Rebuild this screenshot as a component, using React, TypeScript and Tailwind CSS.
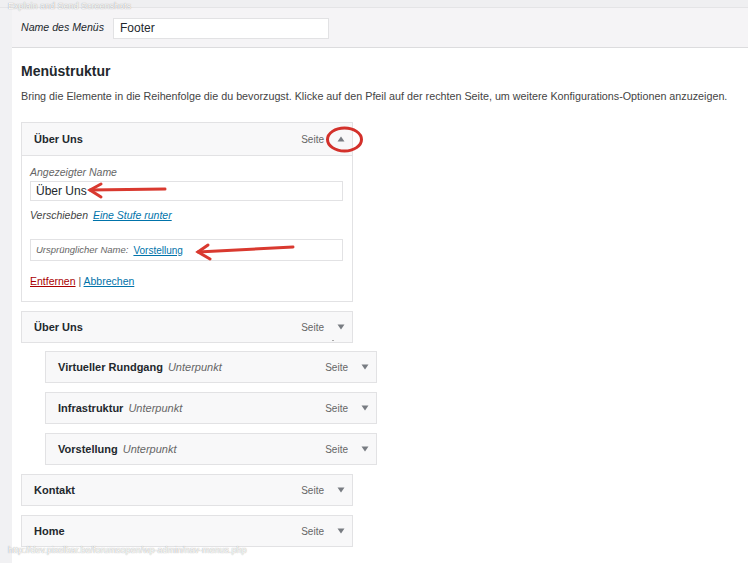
import React from "react";

const Arrow = ({ up = false }: { up?: boolean }) => (
  <svg width="8" height="6" viewBox="0 0 8 6" className="block">
    {up ? <path d="M4 0.5 L7.5 5.5 L0.5 5.5 Z" fill="#787c82" /> : <path d="M0.5 0.5 L7.5 0.5 L4 5.5 Z" fill="#787c82" />}
  </svg>
);

const ItemBar = ({ title, sub, up = false, h = "h-[30px]" }: { title: string; sub?: string; up?: boolean; h?: string }) => (
  <div className={`${h} flex items-center bg-[#f8f8f9] pl-[12px] pr-[7px]`}>
    <span className="font-bold text-[11px] text-[#23282d]">{title}</span>
    {sub && <span className="italic text-[11px] text-[#666] ml-[5px]">{sub}</span>}
    <span className="ml-auto text-[10px] text-[#666]">Seite</span>
    <span className="ml-[13px] w-[8px] flex justify-center">
      <Arrow up={up} />
    </span>
  </div>
);

const Item = ({ title, sub, indent = false, mt = "mt-[9px]" }: { title: string; sub?: string; indent?: boolean; mt?: string }) => (
  <div className={`w-[332px] border border-[#e2e2e4] ${indent ? "ml-[24px]" : ""} ${mt}`}>
    <ItemBar title={title} sub={sub} />
  </div>
);

export default function App() {
  return (
    <div className="relative w-[748px] h-[563px] overflow-hidden bg-[#f1f1f3] font-['Liberation_Sans',Arial,sans-serif] flex flex-col">
      <div className="h-[8px] shrink-0 border-b border-[#e4e4e6] bg-[#efeff1]" />
      <div className="flex-1 ml-[12px] flex flex-col bg-white">
        <div className="h-[40px] shrink-0 flex items-center bg-[#f5f4f6] border-b border-[#dcdcde] pl-[9px] pt-[1px]">
          <span className="italic text-[10.6px] text-[#23282d]">Name des Menüs</span>
          <div className="ml-[9px] w-[216px] h-[21px] bg-white border border-[#e2e2e4] flex items-center pl-[6px] text-[12px] text-[#23282d]">
            Footer
          </div>
        </div>
        <div className="px-[9px]">
          <h2 className="mt-[14px] text-[14px] font-bold text-[#23282d] leading-[18px]">Menüstruktur</h2>
          <p className="mt-[9px] text-[10.75px] text-[#444] leading-[14px]">
            Bring die Elemente in die Reihenfolge die du bevorzugst. Klicke auf den Pfeil auf der rechten Seite, um weitere Konfigurations-Optionen anzuzeigen.
          </p>

          <div className="mt-[19px] w-[332px] border border-[#e2e2e4]">
            <div className="border-b border-[#e2e2e4]">
              <ItemBar title="Über Uns" up h="h-[32px]" />
            </div>
            <div className="px-[8px] pt-[10px] pb-[13px]">
              <div className="italic text-[10.5px] text-[#666] leading-[13px]">Angezeigter Name</div>
              <div className="mt-[2px] w-[313px] h-[20px] border border-[#e2e2e4] flex items-center pl-[5px] text-[12px] text-[#23282d]">
                Über Uns
              </div>
              <div className="mt-[8px] text-[10.5px] leading-[13px] italic text-[#444]">
                Verschieben <a className="ml-[2px] text-[#0073aa] underline">Eine Stufe runter</a>
              </div>
              <div className="mt-[17px] w-[313px] h-[22px] border border-[#e2e2e4] flex items-center pl-[5px] text-[9.5px]">
                <span className="italic text-[#666]">Ursprünglicher Name:</span>
                <a className="ml-[5px] text-[#0073aa] underline text-[10px]">Vorstellung</a>
              </div>
              <div className="mt-[14px] text-[10.5px] leading-[13px] text-[#555]">
                <a className="text-[#a00] underline">Entfernen</a> | <a className="text-[#0073aa] underline">Abbrechen</a>
              </div>
            </div>
          </div>

          <div className="mt-[9px] w-[332px] border border-[#e2e2e4] relative">
            <ItemBar title="Über Uns" />
            <div className="absolute left-[310px] top-[28px] w-[2px] h-[1px] bg-[#aaa]" />
          </div>
          <Item title="Virtueller Rundgang" sub="Unterpunkt" indent mt="mt-[8px]" />
          <Item title="Infrastruktur" sub="Unterpunkt" indent />
          <Item title="Vorstellung" sub="Unterpunkt" indent />
          <Item title="Kontakt" />
          <Item title="Home" />
        </div>
      </div>

      <div className="absolute left-[8px] top-[1px] text-[9px] leading-[10px] text-white [text-shadow:0_0_1px_#7a7a7a]">
        Explain and Send Screenshots
      </div>
      <div className="absolute left-[8px] top-[545px] text-[9px] leading-[10px] text-white [text-shadow:0_0_1px_#7a7a7a]">
        http://dev.pixelbar.be/forumsopen/wp-admin/nav-menus.php
      </div>

      <svg className="absolute left-0 top-0 pointer-events-none" width="748" height="563">
        <ellipse cx="344.5" cy="139.5" rx="17" ry="11.5" fill="none" stroke="#d3312b" strokeWidth="3" />
        <g stroke="#d9392f" strokeWidth="3" strokeLinecap="round" fill="none">
          <path d="M90 190 L165 189" />
          <path d="M101 184 L90 190 L101 197" />
          <path d="M198 252 L293 247" />
          <path d="M208 245 L198 252 L210 259" />
        </g>
      </svg>
    </div>
  );
}
